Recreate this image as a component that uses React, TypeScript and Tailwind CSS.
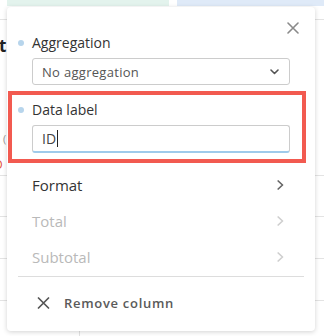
import React from "react";

function Chevron({ color }: { color: string }) {
  return (
    <svg width="7" height="10" viewBox="0 0 7 10" fill="none">
      <polyline points="1.2,1 5.5,5 1.2,9" stroke={color} strokeWidth="1.7" strokeLinecap="round" strokeLinejoin="round" />
    </svg>
  );
}

function Row({ label, muted }: { label: string; muted?: boolean }) {
  return (
    <div className="h-[36px] flex items-center justify-between pl-[25px] pr-[31px]">
      <span className={"text-[15px] leading-[20px] " + (muted ? "text-[#b9b9b9]" : "text-[#333333]")}>{label}</span>
      <Chevron color={muted ? "#cfcfcf" : "#666666"} />
    </div>
  );
}

export default function App() {
  return (
    <div className="relative w-[324px] h-[336px] overflow-hidden bg-white font-['Open_Sans','Noto_Sans',sans-serif]">
      {/* background table */}
      <div className="flex flex-col">
        <div className="h-[20px] border-b border-[#e3e3e3] flex items-start">
          <div className="ml-[7px] w-[162px] h-[6px] bg-[#e3f3ed]" />
          <div className="ml-[8px] flex-1 h-[6px] bg-[#dfeaf8]" />
        </div>
        <div className="h-[156px] border-b border-[#e3e3e3] flex flex-col">
          <div className="mt-[14px] -ml-[1px] text-[17px] leading-[24px] font-bold text-[#222]">t</div>
          <div className="mt-[74px] ml-[3px] text-[11px] leading-[14px] text-[#999]">(</div>
          <div className="mt-[12px] -ml-[6px] text-[12px] leading-[14px] text-[#e0533f]">D</div>
        </div>
        <div className="h-[41px] border-b border-[#e3e3e3]" />
        <div className="h-[42px] border-b border-[#e3e3e3]" />
        <div className="h-[42px] border-b border-[#e3e3e3]" />
        <div className="h-[36px]">
          <div className="ml-[79px] w-0 h-full border-l border-[#e3e3e3]" />
        </div>
      </div>

      {/* popover panel */}
      <div className="absolute left-[7px] top-[7px] w-[308px] h-[324px] bg-white rounded-[4px] shadow-[0_1px_5px_rgba(0,0,0,0.18)] flex flex-col pt-[26px]">
        <button className="absolute right-[16px] top-[15px] w-[12px] h-[12px]">
          <svg width="12" height="12" viewBox="0 0 12 12" fill="none">
            <path d="M1 1L11 11M11 1L1 11" stroke="#8a8a8a" strokeWidth="1.6" strokeLinecap="round" />
          </svg>
        </button>

        {/* Aggregation */}
        <div className="flex items-center pl-[11px] gap-[8px] h-[20px]">
          <span className="w-[6px] h-[6px] rounded-full bg-[#b7d5ec]" />
          <span className="text-[14px] leading-[20px] font-medium text-[#333]">Aggregation</span>
        </div>
        <div className="ml-[25px] mt-[5px] w-[258px] h-[27px] border border-[#cccccc] rounded-[3px] flex items-center justify-between pl-[9px] pr-[10px]">
          <span className="text-[13px] leading-[18px] tracking-[0.3px] text-[#555]">No aggregation</span>
          <svg width="9" height="6" viewBox="0 0 9 6" fill="none">
            <polyline points="1,1 4.5,4.5 8,1" stroke="#555" strokeWidth="1.6" strokeLinecap="round" strokeLinejoin="round" />
          </svg>
        </div>

        {/* Data label (highlighted) */}
        <div className="ml-[1px] mt-[6px] w-[298px] h-[72px] border-4 border-[#f25a50] flex flex-col pt-[5px]">
          <div className="flex items-center pl-[6px] gap-[8px] h-[20px]">
            <span className="w-[6px] h-[6px] rounded-full bg-[#b7d5ec]" />
            <span className="text-[14px] leading-[20px] font-medium text-[#333]">Data label</span>
          </div>
          <div className="ml-[20px] mt-[5px] w-[258px] h-[28px] border border-[#cccccc] border-b-2 border-b-[#9fcaea] rounded-[3px] flex items-center pl-[9px]">
            <span className="text-[14px] leading-[20px] text-[#444]">ID</span>
            <span className="w-[1px] h-[17px] bg-[#222] ml-[1px]" />
          </div>
        </div>

        {/* menu rows */}
        <div className="mt-[4px] flex flex-col">
          <Row label="Format" />
          <Row label="Total" muted />
          <Row label="Subtotal" muted />
        </div>
        <div className="mx-[11px] mt-[1px] h-px bg-[#dddddd]" />
        <div className="h-[52px] flex items-center pl-[30px] gap-[14px]">
          <svg width="13" height="12" viewBox="0 0 13 12" fill="none">
            <path d="M1.5 1L11.5 11M11.5 1L1.5 11" stroke="#555" strokeWidth="1.7" strokeLinecap="round" />
          </svg>
          <span className="text-[13px] leading-[18px] font-semibold tracking-[0.7px] text-[#5a5a5a]">Remove column</span>
        </div>
      </div>
    </div>
  );
}
